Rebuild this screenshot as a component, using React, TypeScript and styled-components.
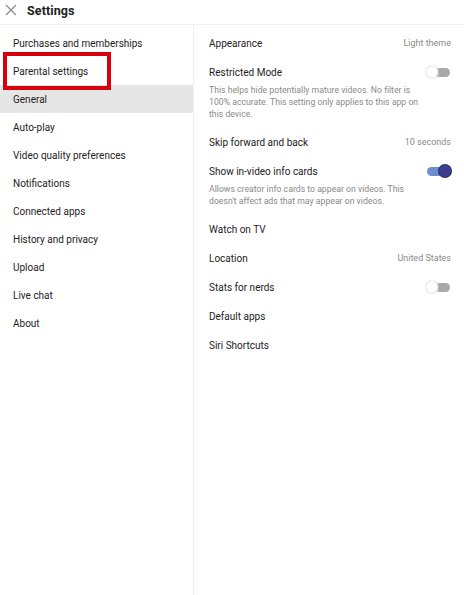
import React from "react";
import styled, { createGlobalStyle } from "styled-components";

const Global = createGlobalStyle`
  html, body { margin: 0; padding: 0; background: #fff; }
  body { font-family: Roboto, "Noto Sans", Arial, sans-serif; color: #222; }
  *, *::before, *::after { box-sizing: border-box; }
`;

const Page = styled.div`
  width: 464px;
  height: 595px;
  display: flex;
  flex-direction: column;
  background: #fff;
`;

const Header = styled.div`
  height: 25px;
  flex: none;
  display: flex;
  align-items: center;
  gap: 10px;
  padding: 0 0 4px 5px;
  border-bottom: 1px solid #f0f0f0;
`;

const Title = styled.div`
  font-size: 12.5px;
  font-weight: 700;
  color: #222;
  letter-spacing: 0.1px;
`;

const Body = styled.div`
  flex: 1;
  display: flex;
  min-height: 0;
`;

const Sidebar = styled.div`
  width: 194px;
  flex: none;
  border-right: 1px solid #efefef;
  padding-top: 4px;
  display: flex;
  flex-direction: column;
`;

const NavItem = styled.div<{ $active?: boolean; $marked?: boolean }>`
  position: relative;
  height: 28px;
  display: flex;
  align-items: center;
  padding-left: 13px;
  font-size: 10px;
  color: #222;
  background: ${(p) => (p.$active ? "#e6e6e6" : "transparent")};
  ${(p) =>
    p.$marked
      ? `&::after {
    content: "";
    position: absolute;
    z-index: 2;
    left: 3px;
    top: -5px;
    width: 108px;
    height: 38px;
    border: 4.5px solid #d9000d;
  }`
      : ""}
`;

const Content = styled.div`
  flex: 1;
  padding: 4px 13px 0 15px;
  display: flex;
  flex-direction: column;
`;

const Item = styled.div`
  padding: 7px 0 8px;
`;

const Row = styled.div`
  display: flex;
  align-items: center;
  justify-content: space-between;
  height: 14px;
`;

const Label = styled.div`
  font-size: 10px;
  color: #222;
`;

const Value = styled.div`
  font-size: 9px;
  color: #8a8a8a;
`;

const Desc = styled.div`
  margin-top: 5px;
  font-size: 8.7px;
  line-height: 12px;
  color: #8a8a8a;
  width: 216px;
`;

const Track = styled.div<{ $on?: boolean }>`
  position: relative;
  width: 23px;
  height: 9px;
  border-radius: 5px;
  margin-right: 1px;
  background: ${(p) =>
    p.$on
      ? "#6c8fd0"
      : "linear-gradient(to right, #f4f4f4 0%, #f4f4f4 40%, #a9a9a9 55%, #a9a9a9 100%)"};
`;

const Knob = styled.div<{ $on?: boolean }>`
  position: absolute;
  top: -2px;
  ${(p) => (p.$on ? "right: -1px;" : "left: -1px;")}
  width: 12px;
  height: 12px;
  border-radius: 50%;
  background: ${(p) => (p.$on ? "#3e3f8c" : "#fff")};
  box-shadow: ${(p) =>
    p.$on ? "0 0 0 1px #2c2d6e" : "0 0 1.5px rgba(0,0,0,0.35)"};
`;

const Toggle = ({ on }: { on?: boolean }) => (
  <Track $on={on}>
    <Knob $on={on} />
  </Track>
);

const CloseIcon = () => (
  <svg width="12" height="12" viewBox="0 0 12 12">
    <path d="M1 1 L11 11 M11 1 L1 11" stroke="#8a8a8a" strokeWidth="1.2" />
  </svg>
);

const navItems = [
  "Purchases and memberships",
  "Parental settings",
  "General",
  "Auto-play",
  "Video quality preferences",
  "Notifications",
  "Connected apps",
  "History and privacy",
  "Upload",
  "Live chat",
  "About",
];

type Setting = { label: string; value?: string; toggle?: "on" | "off"; desc?: string };

const settings: Setting[] = [
  { label: "Appearance", value: "Light theme" },
  {
    label: "Restricted Mode",
    toggle: "off",
    desc: "This helps hide potentially mature videos. No filter is 100% accurate. This setting only applies to this app on this device.",
  },
  { label: "Skip forward and back", value: "10 seconds" },
  {
    label: "Show in-video info cards",
    toggle: "on",
    desc: "Allows creator info cards to appear on videos. This doesn't affect ads that may appear on videos.",
  },
  { label: "Watch on TV" },
  { label: "Location", value: "United States" },
  { label: "Stats for nerds", toggle: "off" },
  { label: "Default apps" },
  { label: "Siri Shortcuts" },
];

export default function App() {
  return (
    <Page>
      <Global />
      <Header>
        <CloseIcon />
        <Title>Settings</Title>
      </Header>
      <Body>
        <Sidebar>
          {navItems.map((n) => (
            <NavItem key={n} $active={n === "General"} $marked={n === "Parental settings"}>
              {n}
            </NavItem>
          ))}
        </Sidebar>
        <Content>
          {settings.map((s) => (
            <Item key={s.label}>
              <Row>
                <Label>{s.label}</Label>
                {s.value && <Value>{s.value}</Value>}
                {s.toggle && <Toggle on={s.toggle === "on"} />}
              </Row>
              {s.desc && <Desc>{s.desc}</Desc>}
            </Item>
          ))}
        </Content>
      </Body>
    </Page>
  );
}
